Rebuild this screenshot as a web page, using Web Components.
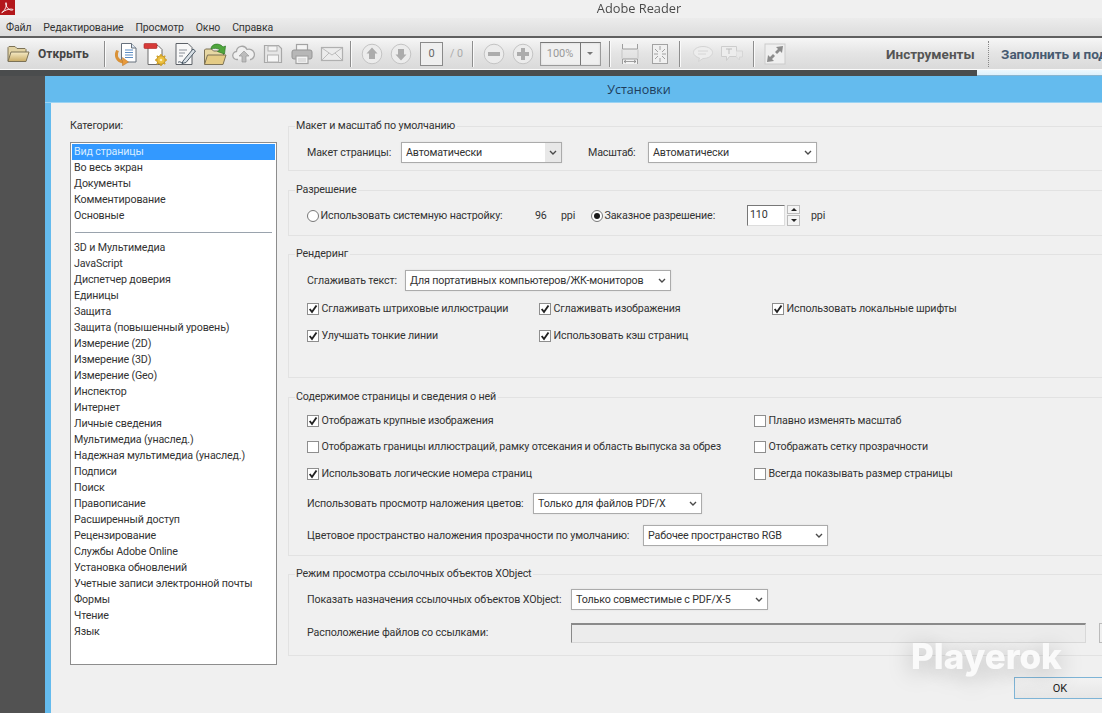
<!DOCTYPE html>
<html lang="ru"><head><meta charset="utf-8"><title>Adobe Reader</title>
<style>
html,body{margin:0;padding:0;height:713px;overflow:hidden;background:#f0f0f0}
body{font:10.7px Roboto,"Open Sans",sans-serif;letter-spacing:-.15px;color:#333}
app-root{width:1278px}
</style></head><body>
<app-root></app-root>
<script>
const ICONS={
folder:`<svg width="24" height="20" viewBox="0 0 24 20"><defs><linearGradient id="f" x1="0" y1="0" x2="0" y2="1"><stop offset="0" stop-color="#f6ebc6"/><stop offset="1" stop-color="#c8ab66"/></linearGradient></defs><path d="M2 17V3.500L3 2.500h6l2 2h8l1 1V8" fill="#e2d3a4" stroke="#7c7257"/><path d="M2 17.500L5 8h18l-3 9.500z" fill="url(#f)" stroke="#7c7257" stroke-linejoin="round"/></svg>`,
docArrow:`<svg width="24" height="24" viewBox="0 0 24 24"><path d="M7.500 1.500h10l4.500 4.500v14H7.500z" fill="#fff" stroke="#66707c"/><path d="M17.500 1.500V6H22" fill="#dce6f0" stroke="#66707c"/><path d="M11 8h8M11 10.500h8M11 13h8M11 15.500h8" stroke="#5e8ec4" stroke-width="1.200"/><path d="M3.500 8.500c-2.500 5.500-.5 10.500 5.500 11.500" fill="none" stroke="#d99238" stroke-width="3"/><path d="M8.500 15.500l6 4.500-6 3.800z" fill="#e89a3c" stroke="#b6752a" stroke-width=".5"/></svg>`,
docGear:`<svg width="24" height="24" viewBox="0 0 24 24"><path d="M5 3.500h10l4 4v15H5z" fill="#fff" stroke="#6d6d6d"/><rect x="1" y="1.500" width="13" height="5" rx="1" fill="#d63a38" stroke="#a82422" stroke-width=".6"/><circle cx="18" cy="18" r="4.300" fill="#eec13f" stroke="#b88a1e"/><path d="M18 12v2M18 22v2M12 18h2M22 18h2M13.800 13.800l1.400 1.400M20.800 20.800l1.400 1.400M13.800 22.200l1.400-1.400M20.800 15.200l1.400-1.400" stroke="#d3a42e" stroke-width="1.600"/><circle cx="18" cy="18" r="1.300" fill="#fbeeb8"/></svg>`,
sign:`<svg width="24" height="24" viewBox="0 0 24 24"><path d="M3 1.500h12l4 4v17H3z" fill="#f8f8f8" stroke="#5c6167"/><path d="M6 8h8M6 11h6M6 14h4" stroke="#8a9099"/><path d="M10 19L20 7l2.500 2L13 20.500l-4 1z" fill="#d9e0e6" stroke="#4c5a66"/><path d="M5 20.500c2-2 3 1 5 0" fill="none" stroke="#3b4a5a"/></svg>`,
folderGreen:`<svg width="24" height="24" viewBox="0 0 24 24"><path d="M1.500 22V8l1-1h6l2 2h9l1 1v3" fill="#e7d7a3" stroke="#7c7257"/><path d="M1.500 22.500L4.500 13H23l-3 9.500z" fill="#e4cb85" stroke="#7c7257" stroke-linejoin="round"/><path d="M8 7C8 2 16 0 20 5l2.500-1-1 8-7-2.500 2.500-1.500C15 6 11 6 8 7z" fill="#4ea53c" stroke="#2f7a26" stroke-width=".7"/></svg>`,
cloud:`<svg width="24" height="20" viewBox="0 0 24 20"><path d="M6 15.500H5a4 4 0 0 1-.5-8 5.500 5.500 0 0 1 10.500-2A4.500 4.500 0 0 1 19 15.500h-1" fill="#f0f0f0" stroke="#a6a6a6" stroke-width="1.300"/><path d="M12 7l5 5h-3v6h-4v-6H7z" fill="#bdbdbd" stroke="#9a9a9a" stroke-width=".7"/></svg>`,
save:`<svg width="20" height="20" viewBox="0 0 20 20"><path d="M1.500 1.500h14l3 3v14h-17z" fill="#e6e6e6" stroke="#a8a8a8" stroke-width="1.200"/><rect x="5" y="2" width="9" height="5" fill="#f4f4f4" stroke="#b2b2b2"/><rect x="4.500" y="11" width="11" height="7" fill="#f6f6f6" stroke="#b2b2b2"/></svg>`,
print:`<svg width="22" height="22" viewBox="0 0 22 22"><rect x="5.500" y="1.500" width="11" height="6" fill="#f4f4f4" stroke="#a3a3a3" stroke-width="1.200"/><rect x="1" y="7" width="20" height="9" rx="2" fill="#b7b7b7" stroke="#959595"/><rect x="5" y="13" width="12" height="7.500" fill="#f4f4f4" stroke="#a3a3a3" stroke-width="1.200"/><path d="M7 16h8M7 18h8" stroke="#c8c8c8"/></svg>`,
mail:`<svg width="24" height="18" viewBox="0 0 24 18"><rect x="1.500" y="2.500" width="21" height="13" fill="#ececec" stroke="#b0b0b0" stroke-width="1.200"/><path d="M2 3l10 7 10-7M2 15l7-7M22 15l-7-7" fill="none" stroke="#bcbcbc"/></svg>`,
up:`<svg width="22" height="22" viewBox="0 0 22 22"><circle cx="11" cy="11" r="9.800" fill="#ececec" stroke="#c4c4c4"/><path d="M11 4.500l5.500 6H14V16H8v-5.500H5.500z" fill="#acacac"/></svg>`,
down:`<svg width="22" height="22" viewBox="0 0 22 22"><circle cx="11" cy="11" r="9.800" fill="#ececec" stroke="#c4c4c4"/><path d="M11 17.500l5.500-6H14V6H8v5.500H5.500z" fill="#acacac"/></svg>`,
minus:`<svg width="22" height="22" viewBox="0 0 22 22"><circle cx="11" cy="11" r="9.800" fill="#ececec" stroke="#c4c4c4"/><rect x="5" y="9" width="12" height="4" fill="#acacac"/></svg>`,
plus:`<svg width="22" height="22" viewBox="0 0 22 22"><circle cx="11" cy="11" r="9.800" fill="#ececec" stroke="#c4c4c4"/><path d="M9 5h4v4h4v4h-4v4H9v-4H5V9h4z" fill="#acacac"/></svg>`,
fitw:`<svg width="18" height="22" viewBox="0 0 18 22"><path d="M1.500 1v5h15V1M1.500 21v-5h15v5" fill="#f2f2f2" stroke="#9d9d9d"/><path d="M1 6.500v9M17 6.500v9" stroke="#c5c5c5"/><path d="M3 18.500h12M3 18.500l2-1.500M3 18.500l2 1.500M15 18.500l-2-1.500M15 18.500l-2 1.500" stroke="#888" stroke-width=".8" fill="none"/></svg>`,
fitp:`<svg width="18" height="22" viewBox="0 0 18 22"><rect x="1.500" y="1.500" width="15" height="19" fill="#f0f0f0" stroke="#a2a2a2"/><path d="M9 3v4M9 15v4M3 11h4M11 11h4M4 6l3 3M14 6l-3 3M4 16l3-3M14 16l-3-3" stroke="#8e8e8e" stroke-width=".8"/></svg>`,
c1:`<svg width="22" height="18" viewBox="0 0 22 18"><path d="M11 1.500c5.300 0 9.500 2.700 9.500 6s-4.200 6-9.500 6l-4.500 3 1-3.500C4 12 1.500 10 1.500 7.500c0-3.300 4.200-6 9.500-6z" fill="#ededed" stroke="#d4d4d4"/><path d="M6 6h10M6 9h8" stroke="#d6d6d6"/></svg>`,
c2:`<svg width="24" height="18" viewBox="0 0 24 18"><path d="M1.500 1.500h15v10h-7l-3 4v-4h-5z" fill="#ededed" stroke="#cdcdcd"/><path d="M16 6h6.500v6h-3v3l-3-3" fill="#e8e8e8" stroke="#d6d6d6"/><path d="M6 4h6M9 4v5" stroke="#bdbdbd"/></svg>`,
expand:`<svg width="22" height="22" viewBox="0 0 22 22"><rect x="1" y="1" width="20" height="20" fill="#efefef" stroke="#cbcbcb"/><path d="M19 3l-1 7-2-2-3 3-2-2 3-3-2-2z" fill="#8c8c8c"/><path d="M3 19l1-7 2 2 3-3 2 2-3 3 2 2z" fill="#8c8c8c"/></svg>`
};
function def(name,css,html,extra){
  class E extends HTMLElement{
    constructor(){super();const r=this.attachShadow({mode:'open'});
      r.innerHTML=`<style>${css}</style>`+(typeof html==='function'?html(this):html);}
    connectedCallback(){ if(extra) extra.call(this); }
  }
  customElements.define(name,E);
}
def('tb-icon',`:host{display:inline-flex;align-items:center;justify-content:center;height:24px;flex:none}svg{display:block}`,
 '',function(){ if(!this._d){this._d=1;this.shadowRoot.innerHTML+=ICONS[this.getAttribute('name')];
   this.style.width=(this.getAttribute('w')||'29.3')+'px'; }});
def('tb-sep',`:host{display:block;width:2px;height:26px;flex:none;background:linear-gradient(90deg,#8e8e8e 50%,#fafafa 50%)}`,'');
def('title-bar',`:host{display:flex;align-items:center;justify-content:center;box-sizing:border-box;height:18px;padding-bottom:2px;background:#f0f0f0;position:relative;color:#4a4a4a;font:12.8px "Open Sans",sans-serif;letter-spacing:0}
 svg{position:absolute;left:0;top:0}`,
 `<svg width="15" height="15" viewBox="0 0 15 15"><rect width="15" height="15" fill="#b3171b"/><path d="M2 12.500c2-.8 3.500-4 4.500-7.500.3-1.500-.2-3-.8-2.200-.5 1 .6 3.800 2.300 5.700 1.300 1.400 3.500 2 4.800 1.500.8-.5-.6-1-2.300-.9-2 .1-5.500 1-8 3-.8.600-1 .6-.5.400z" fill="none" stroke="#fff" stroke-width=".9"/></svg><slot></slot>`);
def('menu-bar',`:host{display:flex;gap:12px;align-items:center;height:18px;padding-left:6px;background:linear-gradient(#ececec,#dcdcdc);border-bottom:2px solid #5f5f5f;font-size:10.5px;color:#333}`,`<slot></slot>`);
def('tool-bar',`:host{display:flex;align-items:center;height:31px;background:linear-gradient(#f6f6f6,#e4e4e4 50%,#dadada);border-bottom:1px solid #fafafa;white-space:nowrap;overflow:hidden;letter-spacing:0}`,`<slot></slot>`);
def('tb-combo',`:host{display:inline-flex;height:24px;box-sizing:border-box;border:1px solid #9a9a9a;border-top-color:#777;background:#f0f0f0;color:#999;font-size:11px;flex:none;box-shadow:inset 0 0 2px #ccc}
 b{font-weight:400;width:39px;display:flex;align-items:center;justify-content:center;border-right:1px solid #777}
 i{flex:1;width:19px;display:flex;align-items:center;justify-content:center}
 i::after{content:"";border:3px solid transparent;border-top:3px solid #777;margin-top:3px}`,`<b><slot></slot></b><i></i>`);
def('tb-page',`:host{display:inline-flex;align-items:center;justify-content:center;width:23px;height:24px;box-sizing:border-box;border:1px solid #8a8a8a;background:#efefef;color:#666;font-size:11px;flex:none}`,`<slot></slot>`);
def('tab-bar',`:host{display:flex;height:6px;background:#4a4c4d}
 i{display:block;margin-left:977px;flex:1;height:7px;background:linear-gradient(#eef8fe 0,#dff1fb 70%,#8ab5cf 70%)}`,`<i></i>`);
def('prefs-dialog',`:host{display:block;flex:1;background:#525252;padding-left:45px;min-height:0;overflow:hidden}
 .win{background:#f0f0f0;border-left:6px solid #64bbee;height:100%;width:1188px;box-sizing:border-box}
 .head{background:#64bbee;margin-left:-6px;height:27px;display:flex;align-items:center;justify-content:center;color:#1e3d5c;font:12.5px "Open Sans",sans-serif;letter-spacing:0;border-bottom:1px solid #9bd3f3;box-sizing:border-box}
 .body{display:flex;padding:14px 0 0 19px;gap:11px}
 .l{width:207px;flex:none}
 .r{flex:1;min-width:0;padding-top:1px}
 .cap{height:24px;padding-top:1px;line-height:16px;color:#333}
 .foot{display:flex;padding:11px 0 0 963px}
 `,`<div class="win"><div class="head"><slot name="title"></slot></div><div class="body"><div class="l"><div class="cap"><slot name="cap"></slot></div><slot name="list"></slot></div><div class="r"><slot name="groups"></slot></div></div><div class="foot"><slot name="foot"></slot></div></div>`);
def('cat-list',`:host{display:block;box-sizing:border-box;height:523px;background:#fff;border:1px solid #8d8d8d;padding:1px;color:#333}`,`<slot></slot>`);
def('cat-item',`:host{display:block;height:16px;line-height:16px;padding-left:2px;white-space:nowrap}
 :host([selected]){background:#3399ff;color:#d8ecff}`,`<slot></slot>`);
def('cat-sep',`:host{display:flex;align-items:center;height:16px;padding:0 3px}i{display:block;flex:1;height:1px;background:#9aa3ad}`,`<i></i>`);
def('group-box',`:host{display:block;color:#333;margin-bottom:var(--gap,10px)}
 fieldset{margin:0;padding:0;border:1px solid #e2e2e2;border-right:0;min-inline-size:0;height:var(--h);box-sizing:border-box}
 legend{margin-left:6px;padding:0 2px 0 1px;height:16px;line-height:16px}`,
 `<fieldset><legend><slot name="t"></slot></legend><slot></slot></fieldset>`);
def('g-row',`:host{display:flex;align-items:center;white-space:nowrap;height:21px;padding-left:18px;margin-top:var(--mt,0)}`,`<slot></slot>`);
def('win-select',`:host{display:inline-flex;align-items:center;box-sizing:border-box;height:21px;border:1px solid #ababab;background:#fff;padding-left:4px;color:#333;position:relative;flex:none;box-shadow:0 0 2px #ddd}
 :host([hot]){background:linear-gradient(90deg,#fff 0,#fff calc(100% - 16px),#e8e8e8 calc(100% - 16px))}
 svg{position:absolute;right:4px;top:7px}`,`<slot></slot><svg width="8" height="6" viewBox="0 0 8 6"><path d="M1 1l3 3 3-3" fill="none" stroke="#4a4a4a" stroke-width="1.400"/></svg>`);
def('win-check',`:host{display:inline-flex;align-items:center;gap:2.5px;flex:none}
 .b{width:10px;height:10px;border:1px solid #8e8e8e;background:#fff;display:block;flex:none}
 svg{display:block}`,h=>`<span class="b">${h.hasAttribute('checked')?'<svg width="10" height="10" viewBox="0 0 10 10"><path d="M1.700 5l2.300 3L8.500 1.500" fill="none" stroke="#222" stroke-width="1.900"/></svg>':''}</span><slot></slot>`);
def('win-radio',`:host{display:inline-flex;align-items:center;gap:1.5px;flex:none}
 .b{width:12px;height:12px;box-sizing:border-box;border-radius:50%;border:1px solid #777;background:#fff;display:flex;align-items:center;justify-content:center}
 i{width:6px;height:6px;border-radius:50%;background:#1a1a1a}`,h=>`<span class="b">${h.hasAttribute('checked')?'<i></i>':''}</span><slot></slot>`);
def('win-spin',`:host{display:inline-flex;align-items:stretch;height:21px;flex:none}
 .v{width:38px;box-sizing:border-box;background:#fff;border:1px solid #ddd;border-left-color:#777;border-top-color:#777;padding:1px 0 0 2px;line-height:16px}
 .a{display:flex;flex-direction:column;gap:1px;margin-left:2px;width:13px}
 .a i{flex:1;background:#f4f4f4;border:1px solid #bbb;display:flex;align-items:center;justify-content:center}
 .a i::after{content:"";border:3px solid transparent}
 .a i:first-child::after{border-bottom-color:#222;margin-top:-3px}
 .a i:last-child::after{border-top-color:#222;margin-top:3px}`,`<span class="v"><slot></slot></span><span class="a"><i></i><i></i></span>`);
def('win-field',`:host{display:block;box-sizing:border-box;height:20px;flex:none;background:#ececec;border:1px solid #d8d8d8;border-top:2px solid #8a8a8a;border-left:1px solid #8a8a8a}`,``);
def('win-button',`:host{display:inline-flex;align-items:center;justify-content:center;box-sizing:border-box;width:92px;height:22px;flex:none;border:1px solid #7eb4d6;background:linear-gradient(#f2f2f2,#e6e6e6);color:#222;font-size:11px;letter-spacing:0}`,`<slot></slot>`);
def('water-mark',`:host{position:absolute;left:911px;top:636px;font:800 35px/40px Inter,"Open Sans",sans-serif;letter-spacing:0;color:#fafafa;text-shadow:0 4px 24px rgba(0,0,0,.28);white-space:nowrap}`,`<slot></slot>`);
def('app-root',`:host{display:flex;flex-direction:column;height:713px;position:relative;filter:blur(.3px)}`,`<slot></slot>`);

const cats=['Вид страницы','Во весь экран','Документы','Комментирование','Основные','-','3D и Мультимедиа','JavaScript','Диспетчер доверия','Единицы','Защита','Защита (повышенный уровень)','Измерение (2D)','Измерение (3D)','Измерение (Geo)','Инспектор','Интернет','Личные сведения','Мультимедиа (унаслед.)','Надежная мультимедиа (унаслед.)','Подписи','Поиск','Правописание','Расширенный доступ','Рецензирование','Службы Adobe Online','Установка обновлений','Учетные записи электронной почты','Формы','Чтение','Язык'];
const ic=(n,w,ml)=>`<tb-icon name="${n}" w="${w||29.3}"${ml?` style="margin-left:${ml}px"`:''}></tb-icon>`;
const lab=(t,w,ml)=>`<span style="width:${w}px;flex:none${ml?`;margin-left:${ml}px`:''}">${t}</span>`;
document.querySelector('app-root').innerHTML=`
<title-bar>Adobe Reader</title-bar>
<menu-bar><span>Файл</span><span>Редактирование</span><span>Просмотр</span><span>Окно</span><span>Справка</span></menu-bar>
<tool-bar>
 <tb-icon name="folder" w="24" style="margin-left:6px"></tb-icon>
 <b style="margin-left:8px;font-size:12px;color:#444;width:50px">Открыть</b>
 <tb-sep style="margin-left:16px"></tb-sep>
 ${ic('docArrow',28.3,6)}${ic('docGear',30.3)}${ic('sign')}${ic('folderGreen')}${ic('cloud')}${ic('save')}${ic('print')}${ic('mail')}
 <tb-sep style="margin-left:4px"></tb-sep>
 ${ic('up',29.3,5)}${ic('down')}
 <tb-page style="margin-left:4px">0</tb-page>
 <span style="margin-left:7px;color:#aaa;width:16px">/ 0</span>
 <tb-sep style="margin-left:6px"></tb-sep>
 ${ic('minus',29.3,5)}${ic('plus')}
 <tb-combo style="margin-left:2px">100%</tb-combo>
 <tb-sep style="margin-left:8px"></tb-sep>
 ${ic('fitw',29.3,5)}${ic('fitp')}
 <tb-sep style="margin-left:5px"></tb-sep>
 ${ic('c1',29.3,7)}${ic('c2')}
 <tb-sep style="margin-left:6px"></tb-sep>
 ${ic('expand',29.3,6)}
 <b style="margin-left:96px;font-size:13.5px;color:#555;width:90px">Инструменты</b>
 <span style="margin-left:12px;height:26px;border-left:1px dotted #888"></span>
 <b style="margin-left:12px;font-size:13.5px;color:#475a70">Заполнить и подписать</b>
</tool-bar>
<tab-bar></tab-bar>
<prefs-dialog>
 <span slot="title">Установки</span>
 <span slot="cap">Категории:</span>
 <cat-list slot="list">${cats.map((c,i)=>c==='-'?'<cat-sep></cat-sep>':`<cat-item${i==0?' selected':''}>${c}</cat-item>`).join('')}</cat-list>
 <div slot="groups">
  <group-box style="--h:53px;--gap:11px"><span slot="t">Макет и масштаб по умолчанию</span>
   <g-row style="--mt:8px">${lab('Макет страницы:',94)}<win-select hot style="width:161px">Автоматически</win-select>${lab('Масштаб:',60,26)}<win-select style="width:169px">Автоматически</win-select></g-row>
  </group-box>
  <group-box style="--h:54px"><span slot="t">Разрешение</span>
   <g-row style="--mt:7px"><win-radio style="width:228px">Использовать системную настройку:</win-radio>${lab('96',26)}${lab('ppi',30)}<win-radio checked style="width:156px">Заказное разрешение:</win-radio><win-spin>110</win-spin>${lab('ppi',30,11)}</g-row>
  </group-box>
  <group-box style="--h:132px;--gap:11px"><span slot="t">Рендеринг</span>
   <g-row style="--mt:8px">${lab('Сглаживать текст:',98)}<win-select style="width:266px">Для портативных компьютеров/ЖК-мониторов</win-select></g-row>
   <g-row style="--mt:7px"><win-check checked style="width:232px">Сглаживать штриховые иллюстрации</win-check><win-check checked style="width:233px">Сглаживать изображения</win-check><win-check checked>Использовать локальные шрифты</win-check></g-row>
   <g-row style="--mt:6px"><win-check checked style="width:232px">Улучшать тонкие линии</win-check><win-check checked>Использовать кэш страниц</win-check></g-row>
  </group-box>
  <group-box style="--h:167px"><span slot="t">Содержимое страницы и сведения о ней</span>
   <g-row style="--mt:5px"><win-check checked style="width:447px">Отображать крупные изображения</win-check><win-check>Плавно изменять масштаб</win-check></g-row>
   <g-row style="--mt:5px"><win-check style="width:447px">Отображать границы иллюстраций, рамку отсекания и область выпуска за обрез</win-check><win-check>Отображать сетку прозрачности</win-check></g-row>
   <g-row style="--mt:6px"><win-check checked style="width:447px">Использовать логические номера страниц</win-check><win-check>Всегда показывать размер страницы</win-check></g-row>
   <g-row style="--mt:9px">${lab('Использовать просмотр наложения цветов:',226)}<win-select style="width:169px">Только для файлов PDF/X</win-select></g-row>
   <g-row style="--mt:11px">${lab('Цветовое пространство наложения прозрачности по умолчанию:',336)}<win-select style="width:185px">Рабочее пространство RGB</win-select></g-row>
  </group-box>
  <group-box style="--h:90px"><span slot="t">Режим просмотра ссылочных объектов XObject</span>
   <g-row style="--mt:7px">${lab('Показать назначения ссылочных объектов XObject:',264)}<win-select style="width:197px">Только совместимые с PDF/X-5</win-select></g-row>
   <g-row style="--mt:12px">${lab('Расположение файлов со ссылками:',264)}<win-field style="width:515px"></win-field><win-field style="width:30px;margin-left:13px;background:#f0f0f0;border:1px solid #bbb"></win-field></g-row>
  </group-box>
 </div>
 <win-button slot="foot">OK</win-button>
</prefs-dialog>
<water-mark>Playerok</water-mark>`;
</script>
</body></html>
